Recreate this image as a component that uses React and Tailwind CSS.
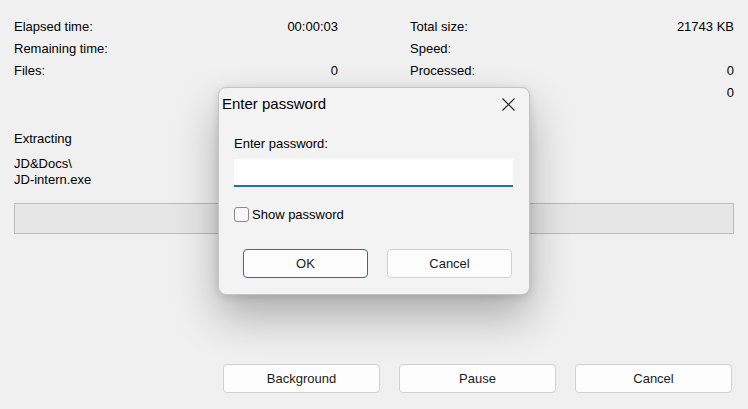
import React from 'react';

const stats = [
  ['Elapsed time:', '00:00:03', 'Total size:', '21743 KB'],
  ['Remaining time:', '', 'Speed:', ''],
  ['Files:', '0', 'Processed:', '0'],
  ['', '', '', '0'],
];

function WinButton({ children, primary, className = '' }) {
  return (
    <button
      className={`h-[29px] rounded-[4px] border bg-[#fdfdfd] text-[13px] text-[#1b1b1b] ${
        primary ? 'border-[#1f6fb8]' : 'border-[#d0d0d0]'
      } ${className}`}
    >
      {children}
    </button>
  );
}

export default function App() {
  return (
    <div className="relative w-[748px] h-[409px] overflow-hidden bg-[#f0f0f0] font-['Liberation_Sans',Arial,sans-serif] text-[13px] text-black">
      <div className="flex h-full flex-col px-[14px] pt-[16px] pb-[16px]">
        {/* Stats */}
        <div className="grid grid-cols-2 gap-x-[72px]">
          {stats.map((row, i) => (
            <React.Fragment key={i}>
              <div className="flex h-[22px] items-center justify-between">
                <span>{row[0]}</span>
                <span>{row[1]}</span>
              </div>
              <div className="flex h-[22px] items-center justify-between">
                <span>{row[2]}</span>
                <span>{row[3]}</span>
              </div>
            </React.Fragment>
          ))}
        </div>

        {/* Extracting */}
        <div className="mt-[27px] leading-[16px]">Extracting</div>
        <div className="mt-[9px] leading-[16px]">
          <div>JD&amp;Docs\</div>
          <div>JD-intern.exe</div>
        </div>

        {/* Progress bar */}
        <div className="mt-[15px] h-[31px] border border-[#bcbcbc] bg-[#e6e6e6]" />

        {/* Bottom buttons */}
        <div className="mt-auto flex justify-end gap-[19px] pr-[2px]">
          <WinButton className="w-[157px]">Background</WinButton>
          <WinButton className="w-[157px]">Pause</WinButton>
          <WinButton className="w-[157px]">Cancel</WinButton>
        </div>
      </div>

      {/* Password dialog */}
      <div className="absolute left-[218px] top-[87px] flex h-[208px] w-[312px] flex-col rounded-[8px] border border-[#c4c4c4] bg-[#f3f3f3] shadow-[0_22px_44px_rgba(0,0,0,0.28),0_2px_8px_rgba(0,0,0,0.12)]">
        <div className="flex h-[32px] items-center justify-between pl-[3px] pr-[14px]">
          <span className="text-[15px]">Enter password</span>
          <svg width="13" height="13" viewBox="0 0 13 13" className="text-[#1b1b1b]">
            <path d="M0.5 0.5 L12.5 12.5 M12.5 0.5 L0.5 12.5" stroke="currentColor" strokeWidth="1.1" fill="none" />
          </svg>
        </div>
        <div className="flex flex-col pl-[15px] pr-[16px]">
          <div className="mt-[15px] leading-[18px]">Enter password:</div>
          <div className="mt-[6px] h-[28px] border-b-2 border-[#1f6fb8] bg-white" />
          <label className="mt-[20px] flex h-[15px] items-center gap-[3px]">
            <span className="h-[15px] w-[15px] rounded-[3px] border border-[#8a8a8a] bg-[#f7f7f7]" />
            <span>Show password</span>
          </label>
          <div className="mt-[27px] flex gap-[19px] pl-[9px]">
            <WinButton primary className="w-[125px]">OK</WinButton>
            <WinButton className="w-[125px]">Cancel</WinButton>
          </div>
        </div>
      </div>
    </div>
  );
}
